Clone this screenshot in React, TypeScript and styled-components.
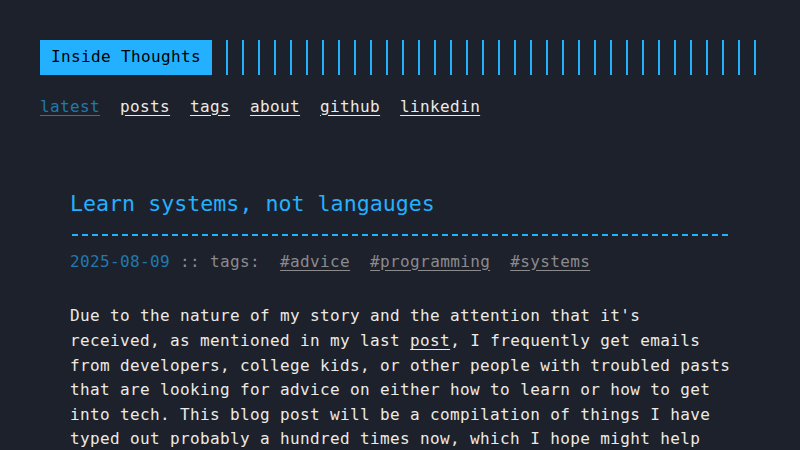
import React from "react";
import styled, { createGlobalStyle } from "styled-components";

const accent = "#23b0ff";
const accentDim = "#2179ad";
const fg = "#eceae5";
const bg = "#1d212c";
const muted = "#8b8a8c";

const Global = createGlobalStyle`
  html, body { margin: 0; padding: 0; background: ${bg}; }
  body {
    font-family: "DejaVu Sans Mono", "Liberation Mono", monospace;
    font-size: 16px;
    line-height: 24.64px;
    letter-spacing: 0.37px;
    color: ${fg};
  }
`;

const Container = styled.div`
  display: flex;
  flex-direction: column;
  padding: 40px;
  min-height: 100vh;
  box-sizing: border-box;
`;

const Header = styled.header`
  display: flex;
  flex-direction: column;
`;

const LogoRow = styled.div`
  display: flex;
  align-items: stretch;
  gap: 14px;
`;

const Logo = styled.a`
  display: flex;
  align-items: center;
  background: ${accent};
  color: #000;
  padding: 5px 11px;
  text-decoration: none;
  white-space: nowrap;
`;

const Bars = styled.div`
  flex: 1;
  background: repeating-linear-gradient(
    90deg,
    ${accent},
    ${accent} 2px,
    transparent 2px,
    transparent 16px
  );
`;

const Menu = styled.nav`
  display: flex;
  gap: 20px;
  margin: 20px 0;
`;

const MenuLink = styled.a<{ $active?: boolean }>`
  color: ${(p) => (p.$active ? accentDim : fg)};
  text-decoration: underline;
  text-underline-offset: 3px;
`;

const Post = styled.article`
  padding: 48px 30px 0;
`;

const Title = styled.h1`
  margin: 0;
  font-size: 21.6px;
  font-weight: normal;
  line-height: 33.3px;
  letter-spacing: 0.03px;
  color: ${accent};
`;

const Dashes = styled.div`
  width: 660px;
  height: 2px;
  margin-top: 13px;
  background: repeating-linear-gradient(
    90deg,
    transparent 0,
    transparent 2px,
    ${accent} 2px,
    ${accent} 8px,
    transparent 8px,
    transparent 10px
  );
`;

const Meta = styled.div`
  color: ${muted};
  margin-top: 14px;
  white-space: pre;
`;

const DateText = styled.span`
  color: ${accentDim};
`;

const Tag = styled.a`
  color: ${muted};
  text-decoration: underline;
  text-underline-offset: 3px;
`;

const Body = styled.p`
  margin: 30px 0 0;
  width: 664px;
`;

const InlineLink = styled.a`
  color: ${fg};
  text-decoration: underline;
  text-underline-offset: 3px;
`;

export default function App() {
  const menu = ["latest", "posts", "tags", "about", "github", "linkedin"];
  return (
    <>
      <Global />
      <Container>
        <Header>
          <LogoRow>
            <Logo>Inside Thoughts</Logo>
            <Bars />
          </LogoRow>
          <Menu>
            {menu.map((m, i) => (
              <MenuLink key={m} $active={i === 0}>
                {m}
              </MenuLink>
            ))}
          </Menu>
        </Header>
        <Post>
          <Title>Learn systems, not langauges</Title>
          <Dashes />
          <Meta>
            <DateText>2025-08-09</DateText>
            {" :: tags:  "}
            <Tag>#advice</Tag>
            {"  "}
            <Tag>#programming</Tag>
            {"  "}
            <Tag>#systems</Tag>
          </Meta>
          <Body>
            Due to the nature of my story and the attention that it's
            received, as mentioned in my last <InlineLink>post</InlineLink>, I
            frequently get emails from developers, college kids, or other
            people with troubled pasts that are looking for advice on either
            how to learn or how to get into tech. This blog post will be a
            compilation of things I have typed out probably a hundred times
            now, which I hope might help
          </Body>
        </Post>
      </Container>
    </>
  );
}
